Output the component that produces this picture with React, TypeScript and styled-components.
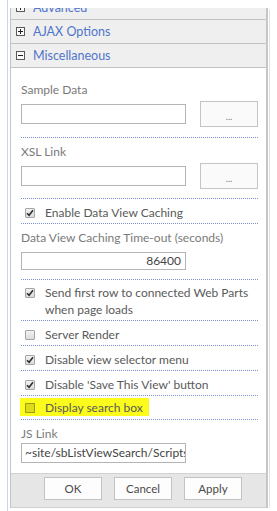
import React from "react";
import styled, { createGlobalStyle } from "styled-components";

const Global = createGlobalStyle`
  html, body { margin: 0; padding: 0; background: #fff; }
  body { font-family: Lato, "Open Sans", sans-serif; }
  * { box-sizing: border-box; }
`;

const Page = styled.div`
  width: 277px;
  height: 511px;
  padding-left: 7px;
  display: flex;
  overflow: hidden;
`;

const Rail = styled.div`
  border-left: 1px solid #c9d7ec;
  padding-left: 2px;
  padding-top: 8px;
  display: flex;
  align-items: flex-start;
  height: 511px;
`;

const Panel = styled.div`
  width: 258px;
  height: 500px;
  display: flex;
  flex-direction: column;
  border-left: 1px solid #c4c4c4;
  border-right: 2px solid #c6c6c6;
`;

const Edge = styled.div`
  width: 1px;
  height: 498px;
  margin-top: 2px;
  margin-left: 1px;
  background: #e2e2e2;
`;

const Scroller = styled.div`
  flex: 1;
  overflow: hidden;
`;

/* the pane is scrolled: its first header is partly out of view */
const ScrolledContent = styled.div`
  margin-top: -12px;
`;

const Header = styled.div`
  height: 24px;
  display: flex;
  align-items: center;
  gap: 8px;
  padding-left: 5px;
  background: #efefef;
  border-bottom: 1px solid #c2c2c2;
  font-size: 12.5px;
  color: #5075c9;
`;

const ToggleBox = styled.span`
  width: 9px;
  height: 9px;
  border: 1px solid #5a5a5a;
  background: #fafafa;
  position: relative;
  display: inline-block;
  flex: none;
`;

const Content = styled.div`
  padding: 8px 8px 0 10px;
`;

const Section = styled.div<{ $pt?: number; $pb?: number; $last?: boolean }>`
  padding-top: ${(p) => p.$pt ?? 5}px;
  padding-bottom: ${(p) => p.$pb ?? 2}px;
  border-bottom: ${(p) => (p.$last ? "none" : "1px dotted #7f8fd6")};
`;

const Label = styled.div`
  font-size: 12px;
  line-height: 17px;
  color: #7a7a7a;
`;

const FieldRow = styled.div<{ $mt?: number }>`
  display: flex;
  align-items: center;
  justify-content: space-between;
  margin-top: ${(p) => p.$mt ?? 3}px;
`;

const TextBox = styled.div<{ $align?: string; $h?: number }>`
  width: 165px;
  height: ${(p) => p.$h ?? 20}px;
  border: 1px solid #b4b4b4;
  background: #fff;
  font-size: 12px;
  line-height: ${(p) => (p.$h ?? 20) - 2}px;
  color: #444;
  padding: 0 4px 0 3px;
  text-align: ${(p) => p.$align ?? "left"};
  white-space: nowrap;
  overflow: hidden;
`;

const DotsButton = styled.div`
  width: 58px;
  height: 26px;
  border: 1px solid #c4c4c4;
  background: #fafafa;
  display: flex;
  align-items: center;
  justify-content: center;
  font-size: 9px;
  color: #777;
  padding-top: 4px;
`;

const CheckRow = styled.div`
  display: flex;
  align-items: center;
  padding-left: 4px;
  gap: 10px;
  font-size: 12px;
  line-height: 17px;
  color: #5a5a5a;
`;

const Box = styled.span<{ $hl?: boolean }>`
  width: 10px;
  height: 10px;
  flex: none;
  border: 1px solid ${(p) => (p.$hl ? "rgba(0,0,0,0.3)" : "#a6a6a6")};
  border-radius: 1px;
  background: ${(p) => (p.$hl ? "rgba(0,0,0,0.12)" : "linear-gradient(#f2f2f2, #dcdcdc)")};
  display: flex;
  align-items: center;
  justify-content: center;
  align-self: flex-start;
  margin-top: 4px;
`;

const Highlight = styled.div`
  display: inline-flex;
  align-items: center;
  gap: 10px;
  margin-left: -5px;
  padding: 1px 6px 0 5px;
  background: #fbfb1c;
`;

const Footer = styled.div`
  height: 35px;
  background: #e6e6e6;
  border-top: 1px solid #d2d2d2;
  border-bottom: 1px solid #d0d0d0;
  display: flex;
  align-items: flex-start;
  gap: 12px;
  padding: 3px 0 0 33px;
`;

const FooterButton = styled.div`
  width: 58px;
  height: 23px;
  border: 1px solid #c3c3c3;
  background: #fdfdfd;
  display: flex;
  align-items: center;
  justify-content: center;
  font-size: 11.5px;
  color: #4a4a4a;
`;

const Check = () => (
  <svg width="8" height="8" viewBox="0 0 8 8">
    <path d="M1 4.2 L3.1 6.3 L7 1.3" fill="none" stroke="#2e2e2e" strokeWidth="1.6" />
  </svg>
);

const Toggle = ({ open }: { open?: boolean }) => (
  <ToggleBox>
    <svg width="7" height="7" viewBox="0 0 7 7" style={{ position: "absolute", left: 0, top: 0 }}>
      <rect x="1" y="3" width="5" height="1" fill="#222" />
      {!open && <rect x="3" y="1" width="1" height="5" fill="#222" />}
    </svg>
  </ToggleBox>
);

const CheckItem = ({ checked, children }: { checked?: boolean; children: React.ReactNode }) => (
  <CheckRow>
    <Box>{checked && <Check />}</Box>
    <span>{children}</span>
  </CheckRow>
);

export default function App() {
  return (
    <>
      <Global />
      <Page>
        <Rail>
          <Panel>
            <Scroller>
              <ScrolledContent>
                <Header>
                  <Toggle />
                  Advanced
                </Header>
                <Header>
                  <Toggle />
                  AJAX Options
                </Header>
                <Header>
                  <Toggle open />
                  Miscellaneous
                </Header>
                <Content>
                  <Section $pb={10}>
                    <Label>Sample Data</Label>
                    <FieldRow>
                      <TextBox />
                      <DotsButton>...</DotsButton>
                    </FieldRow>
                  </Section>
                  <Section $pb={9}>
                    <Label>XSL Link</Label>
                    <FieldRow>
                      <TextBox />
                      <DotsButton>...</DotsButton>
                    </FieldRow>
                  </Section>
                  <Section>
                    <CheckItem checked>Enable Data View Caching</CheckItem>
                  </Section>
                  <Section $pb={9}>
                    <Label>Data View Caching Time-out (seconds)</Label>
                    <FieldRow $mt={6}>
                      <TextBox $align="right" $h={18}>86400</TextBox>
                    </FieldRow>
                  </Section>
                  <Section $pt={4} $pb={2}>
                    <CheckItem checked>
                      Send first row to connected Web Parts when page loads
                    </CheckItem>
                  </Section>
                  <Section>
                    <CheckItem>Server Render</CheckItem>
                  </Section>
                  <Section>
                    <CheckItem checked>Disable view selector menu</CheckItem>
                  </Section>
                  <Section>
                    <CheckItem checked>Disable 'Save This View' button</CheckItem>
                  </Section>
                  <Section $pt={2} $pb={3}>
                    <CheckRow>
                      <Highlight>
                        <Box $hl />
                        <span>Display search box</span>
                      </Highlight>
                    </CheckRow>
                  </Section>
                  <Section $last>
                    <Label>JS Link</Label>
                    <FieldRow $mt={1}>
                      <TextBox>~site/sbListViewSearch/Scripts/sbListViewSearch.js</TextBox>
                    </FieldRow>
                  </Section>
                </Content>
              </ScrolledContent>
            </Scroller>
            <Footer>
              <FooterButton>OK</FooterButton>
              <FooterButton>Cancel</FooterButton>
              <FooterButton>Apply</FooterButton>
            </Footer>
          </Panel>
          <Edge />
        </Rail>
      </Page>
    </>
  );
}
